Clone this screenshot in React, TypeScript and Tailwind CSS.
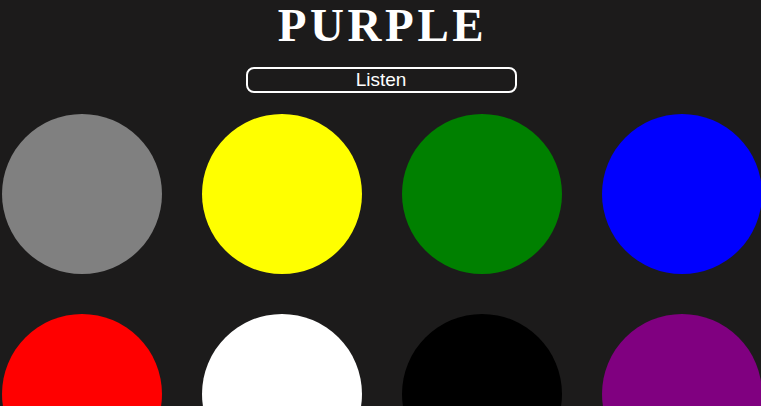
const colors = ["#808080", "#ffff00", "#008000", "#0000ff", "#ff0000", "#ffffff", "#000000", "#800080"];

export default function App() {
  return (
    <div className="h-[406px] w-[761px] overflow-hidden bg-[#1c1b1b]">
      <h1 className="pl-[4px] pt-[1px] text-center font-['Liberation_Serif',serif] text-[47px] font-bold leading-[49px] tracking-[3.6px] text-white">
        PURPLE
      </h1>
      <div className="mt-[17px] flex justify-center">
        <button className="ml-[1px] h-[26px] w-[271px] rounded-lg border-2 border-white font-['Liberation_Sans',sans-serif] text-[19px] leading-[20px] text-white">
          Listen
        </button>
      </div>
      <div className="mt-[21px] flex w-[800px] flex-wrap gap-10 pl-[2px]">
        {colors.map((c) => (
          <div key={c} className="h-40 w-40 shrink-0 rounded-full" style={{ backgroundColor: c }} />
        ))}
      </div>
    </div>
  );
}
